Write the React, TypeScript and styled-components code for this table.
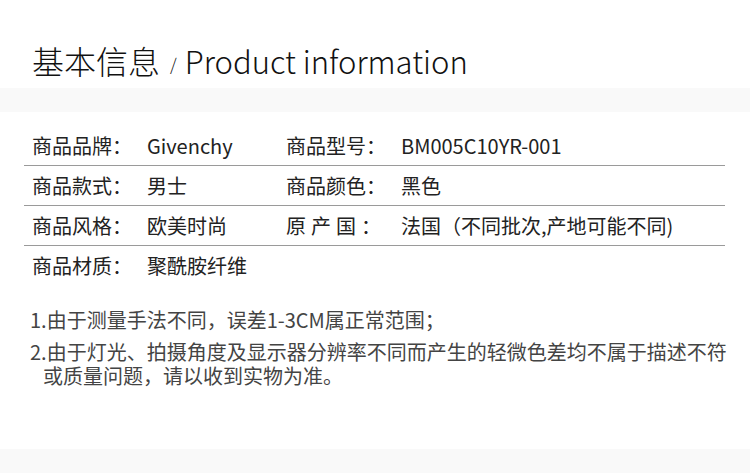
import React from "react";
import styled, { createGlobalStyle } from "styled-components";

const GlobalStyle = createGlobalStyle`
  html, body {
    margin: 0;
    padding: 0;
    background: #fff;
  }
  body {
    font-family: "Noto Sans CJK SC", "Noto Sans", sans-serif;
  }
`;

const Page = styled.div`
  width: 750px;
  height: 473px;
  display: flex;
  flex-direction: column;
  overflow: hidden;
`;

const Header = styled.div`
  height: 88px;
  display: flex;
  align-items: center;
  padding: 32px 0 0 32px;
  box-sizing: border-box;
  color: #111;
`;

const TitleCn = styled.span`
  font-size: 32px;
  font-weight: 300;
  line-height: 1;
`;

const Slash = styled.span`
  font-size: 17px;
  font-weight: 300;
  margin: 6px 8px 0 10px;
`;

const TitleEn = styled.span`
  font-size: 31px;
  font-weight: 300;
  line-height: 1;
`;

const Band = styled.div<{ $grow?: boolean }>`
  height: 24px;
  background: #f9f9f9;
  flex-shrink: 0;
  ${(p) => (p.$grow ? "flex: 1;" : "")}
`;

const Body = styled.div`
  padding: 14px 25px 0 24px;
  height: 337px;
  box-sizing: border-box;
`;

const Table = styled.div`
  display: flex;
  flex-direction: column;
`;

const Row = styled.div<{ $last?: boolean }>`
  display: grid;
  grid-template-columns: 254px 1fr;
  height: 39px;
  align-items: center;
  padding-left: 8px;
  border-bottom: ${(p) => (p.$last ? "none" : "1px solid #9a9a9a")};
  font-size: 20px;
  color: #222;
`;

const Cell = styled.div`
  display: flex;
  white-space: nowrap;
`;

const Label = styled.span<{ $spaced?: boolean }>`
  width: 115px;
  flex-shrink: 0;
  letter-spacing: ${(p) => (p.$spaced ? "5px" : "0")};
`;

const Notes = styled.ol`
  list-style: none;
  margin: 23px -12px 0 6px;
  padding: 0;
  color: #444;
  font-size: 20px;
  line-height: 24px;
`;

const Note = styled.li`
  padding-left: 13px;
  text-indent: -13px;
  margin-bottom: 8px;
`;

type Field = { label: string; value: string; spaced?: boolean };

const rows: Field[][] = [
  [
    { label: "商品品牌：", value: "Givenchy" },
    { label: "商品型号：", value: "BM005C10YR-001" },
  ],
  [
    { label: "商品款式：", value: "男士" },
    { label: "商品颜色：", value: "黑色" },
  ],
  [
    { label: "商品风格：", value: "欧美时尚" },
    { label: "原产国：", value: "法国（不同批次,产地可能不同)", spaced: true },
  ],
  [{ label: "商品材质：", value: "聚酰胺纤维" }],
];

export default function App() {
  return (
    <Page>
      <GlobalStyle />
      <Header>
        <TitleCn>基本信息</TitleCn>
        <Slash>/</Slash>
        <TitleEn>Product information</TitleEn>
      </Header>
      <Band />
      <Body>
        <Table>
          {rows.map((r, i) => (
            <Row key={i} $last={i === rows.length - 1}>
              {r.map((f) => (
                <Cell key={f.label}>
                  <Label $spaced={f.spaced}>{f.label}</Label>
                  <span>{f.value}</span>
                </Cell>
              ))}
            </Row>
          ))}
        </Table>
        <Notes>
          <Note>1.由于测量手法不同，误差1-3CM属正常范围；</Note>
          <Note>
            2.由于灯光、拍摄角度及显示器分辨率不同而产生的轻微色差均不属于描述不符或质量问题，请以收到实物为准。
          </Note>
        </Notes>
      </Body>
      <Band $grow />
    </Page>
  );
}
